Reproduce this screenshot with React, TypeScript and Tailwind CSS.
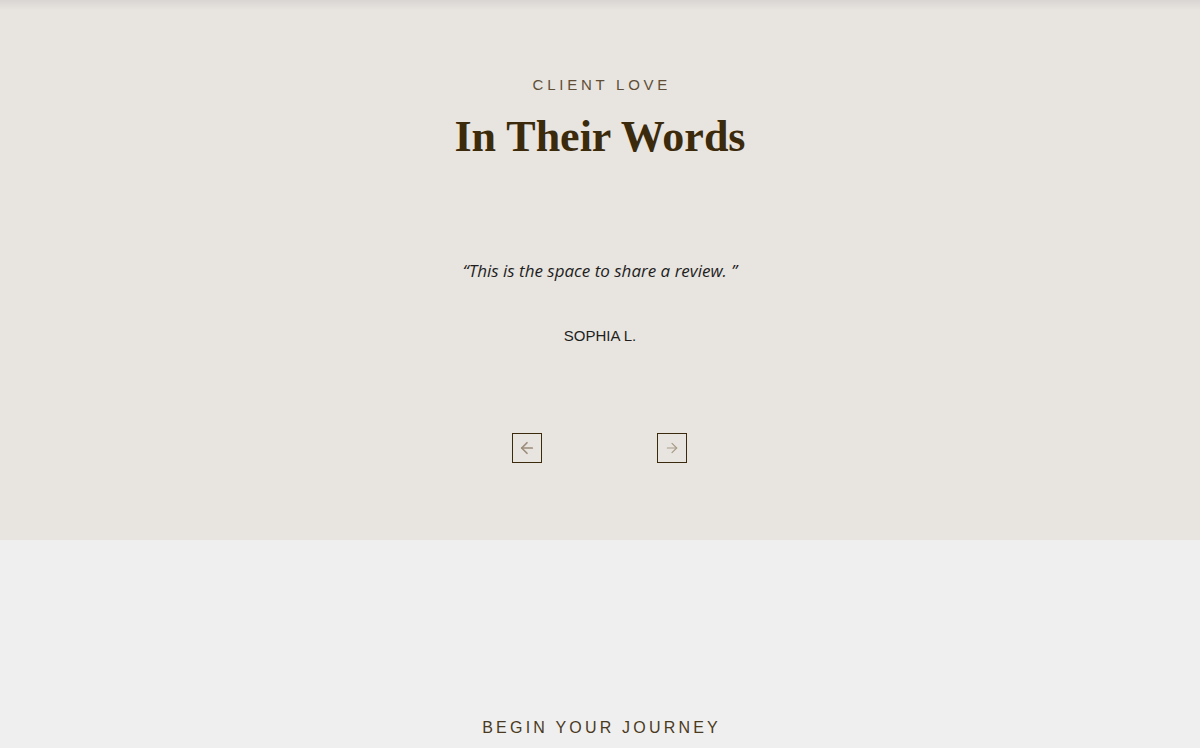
import React, { useState } from 'react';
import { ArrowLeft, ArrowRight } from 'lucide-react';

const reviews = [
  { quote: 'This is the space to share a review. ', name: 'SOPHIA L.' },
];

const Testimonials: React.FC = () => {
  const [index, setIndex] = useState(0);
  const review = reviews[index];

  const prev = () => setIndex((index - 1 + reviews.length) % reviews.length);
  const next = () => setIndex((index + 1) % reviews.length);

  return (
    <section className="relative bg-[#e8e4df] pt-[75px] h-[540px] flex flex-col items-center">
      <div className="pointer-events-none absolute inset-x-0 top-0 h-[10px] bg-gradient-to-b from-[#d9d5d3] to-transparent" />
      <p className="text-[15px] leading-[20px] tracking-[0.25em] text-[#5e4e38] font-['Liberation_Sans',sans-serif] pl-[0.25em]">
        CLIENT LOVE
      </p>
      <h2 className="mt-[15px] text-[44px] leading-[54px] font-bold text-[#3b2a0c] font-['Liberation_Serif',serif]">
        In Their Words
      </h2>

      <p className="mt-[95px] text-[17px] leading-[24px] italic text-[#1e1e1e] font-['Open_Sans',sans-serif]">
        “{review.quote}”
      </p>
      <p className="mt-[43px] text-[15px] leading-[20px] text-[#1e1e1e] font-['Liberation_Sans',sans-serif]">
        {review.name}
      </p>

      <div className="mt-[87px] mr-[1px] flex items-center gap-[115px]">
        <button
          onClick={prev}
          className="w-[30px] h-[30px] border border-[#3b2a0c] flex items-center justify-center text-[#9b8d7a]"
        >
          <ArrowLeft size={18} strokeWidth={2.25} />
        </button>
        <button
          onClick={next}
          className="w-[30px] h-[30px] border border-[#3b2a0c] flex items-center justify-center text-[#a89b89]"
        >
          <ArrowRight size={16} strokeWidth={1.75} />
        </button>
      </div>
    </section>
  );
};

const Journey: React.FC = () => (
  <section className="bg-[#efefef] h-[300px] pt-[178px] flex flex-col items-center">
    <p className="text-[16px] leading-[20px] tracking-[0.2em] text-[#4a3a22] font-['Liberation_Sans',sans-serif] pl-[0.2em]">
      BEGIN YOUR JOURNEY
    </p>
  </section>
);

export default function App() {
  return (
    <main className="w-full min-h-screen bg-[#efefef]">
      <Testimonials />
      <Journey />
    </main>
  );
}
